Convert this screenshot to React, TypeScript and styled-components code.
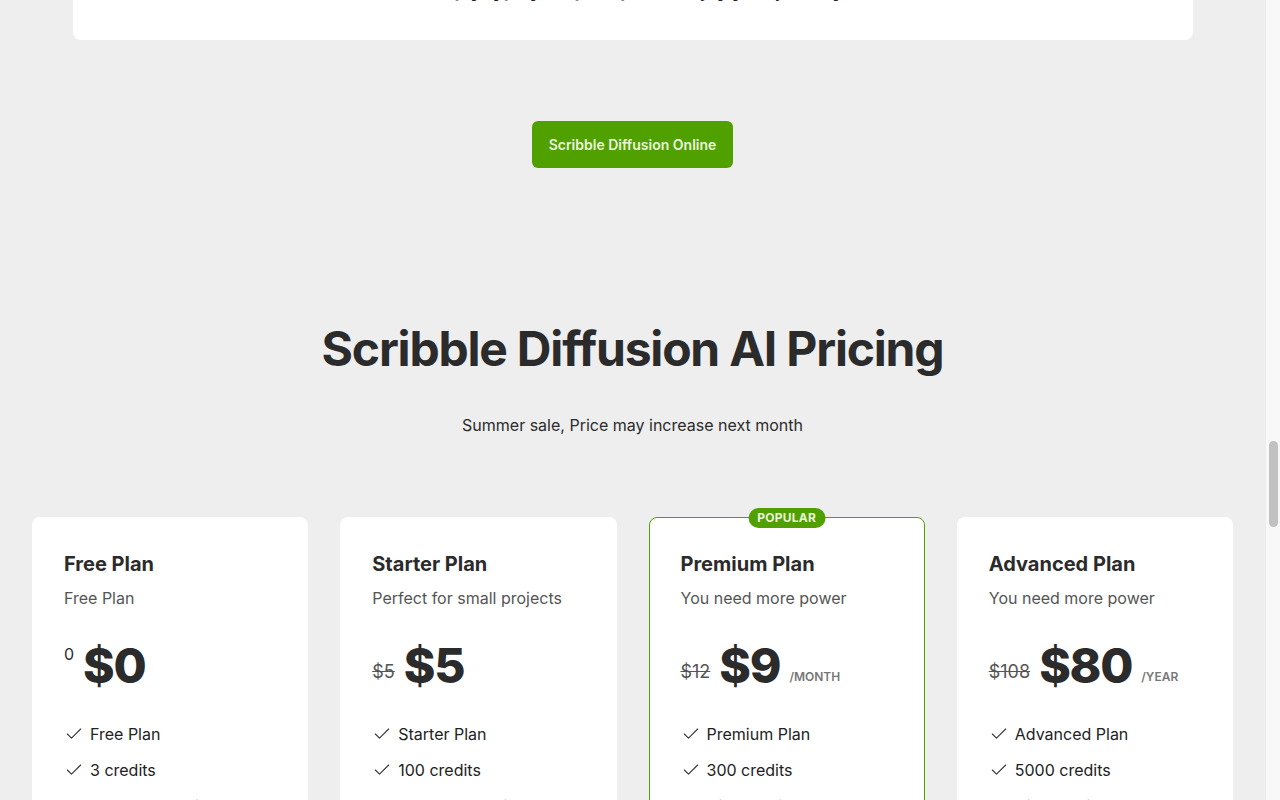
import { useLayoutEffect, useRef } from 'react'
import styled, { createGlobalStyle } from 'styled-components'
import { Check } from 'lucide-react'

const GlobalStyle = createGlobalStyle`
  html, body {
    margin: 0;
    padding: 0;
    background: #eeeeee;
  }
  body {
    font-family: Inter, "Noto Sans", "Liberation Sans", sans-serif;
    color: #222222;
    -webkit-font-smoothing: antialiased;
  }
  * {
    box-sizing: border-box;
  }
`

const Page = styled.div`
  margin-right: 15px;
`

// window scrollbar, drawn since the headless browser hides the native one
const ScrollTrack = styled.div`
  position: fixed;
  top: 0;
  right: 0;
  bottom: 0;
  width: 15px;
  background: #f8f8f8;
  border-left: 1px solid #ececec;
`

const ScrollThumb = styled.div`
  position: absolute;
  top: 441px;
  left: 3px;
  width: 9px;
  height: 86px;
  border-radius: 5px;
  background: #c1c1c1;
`

const Nav = styled.header`
  height: 64px;
  display: flex;
  align-items: center;
  justify-content: space-between;
  padding: 0 32px;
  background: #ffffff;
  border-bottom: 1px solid #e2e2e2;
`

const Brand = styled.div`
  font-size: 20px;
  font-weight: 800;
  color: #2b2b2b;
`

const NavLinks = styled.nav`
  display: flex;
  gap: 28px;
  font-size: 15px;
  color: #444;
`

const Hero = styled.section`
  display: flex;
  flex-direction: column;
  align-items: center;
  padding: 120px 32px 80px;
  text-align: center;
`

const HeroTitle = styled.h1`
  margin: 0;
  font-size: 60px;
  font-weight: 800;
  color: #2b2b2b;
  letter-spacing: -0.01em;
`

const HeroText = styled.p`
  max-width: 720px;
  margin: 28px 0 0;
  font-size: 18px;
  line-height: 1.6;
  color: #444;
`

const Container = styled.div`
  max-width: 1120px;
  margin: 0 auto;
`

const Section = styled.section`
  padding: 80px 0;
`

const SectionTitle = styled.h2`
  margin: 0 0 40px;
  text-align: center;
  font-size: 40px;
  font-weight: 800;
  color: #2b2b2b;
`

const FeatureGrid = styled.div`
  display: grid;
  grid-template-columns: repeat(3, 1fr);
  gap: 32px;
`

const FeatureCard = styled.div`
  background: #ffffff;
  border-radius: 8px;
  padding: 32px;
  min-height: 220px;
`

const FeatureName = styled.h3`
  margin: 0 0 12px;
  font-size: 20px;
  font-weight: 700;
  color: #2b2b2b;
`

const FeatureText = styled.p`
  margin: 0;
  font-size: 16px;
  line-height: 1.6;
  color: #555;
`

const Gallery = styled.div`
  display: grid;
  grid-template-columns: repeat(4, 1fr);
  gap: 24px;
`

const Tile = styled.div<{ $hue: number }>`
  height: 260px;
  border-radius: 8px;
  background: linear-gradient(135deg, hsl(${p => p.$hue}, 45%, 82%), hsl(${p => p.$hue + 40}, 40%, 70%));
`

const InfoCard = styled.div`
  background: #ffffff;
  border-radius: 8px;
  padding: 48px 56px 36px;
  text-align: center;
`

const Step = styled.p`
  margin: 0 0 20px;
  font-size: 16px;
  line-height: 1.7;
  color: #444;
`

const InfoLead = styled.p`
  margin: 0;
  font-size: 18px;
  font-weight: 700;
  line-height: 27px;
  color: #222;
`

const CtaRow = styled.div`
  display: flex;
  justify-content: center;
  margin-top: 81px;
`

const CtaButton = styled.button`
  border: none;
  border-radius: 6px;
  padding: 14px 17px;
  background: #50a000;
  color: #eaf6dc;
  font-family: inherit;
  font-size: 14px;
  font-weight: 600;
  line-height: 19px;
  cursor: pointer;
`

const Pricing = styled.section`
  padding: 152px 32px 80px;
  display: flex;
  flex-direction: column;
  align-items: center;
`

const PricingTitle = styled.h2`
  margin: 0;
  font-size: 48px;
  line-height: 1.2;
  font-weight: 700;
  letter-spacing: -0.025em;
  color: #2b2b2b;
`

const PricingSub = styled.p`
  margin: 35px 0 0;
  font-size: 16px;
  line-height: 24px;
  color: #2b2b2b;
`

const PlanGrid = styled.div`
  width: 100%;
  margin-top: 80px;
  display: grid;
  grid-template-columns: repeat(4, 1fr);
  gap: 32px;
`

const PlanCard = styled.div<{ $featured?: boolean }>`
  position: relative;
  background: #ffffff;
  border-radius: 8px;
  border: 1px solid ${p => (p.$featured ? '#50a000' : 'transparent')};
  padding: 32px 31px 32px;
  display: flex;
  flex-direction: column;
`

const Badge = styled.span`
  position: absolute;
  top: -10px;
  left: 50%;
  transform: translateX(-50%);
  height: 20px;
  padding: 0 9px;
  display: flex;
  align-items: center;
  border-radius: 999px;
  background: #50a000;
  color: #eaf6dc;
  font-size: 12px;
  font-weight: 700;
  letter-spacing: 0.02em;
`

const PlanName = styled.h3`
  margin: 0;
  font-size: 20px;
  line-height: 28px;
  font-weight: 700;
  color: #2b2b2b;
`

const PlanDesc = styled.p`
  margin: 8px 0 0;
  font-size: 16px;
  line-height: 24px;
  color: #555;
`

const PriceRow = styled.div`
  margin-top: 32px;
  display: flex;
  align-items: flex-end;
  gap: 9px;
`

const OldPrice = styled.span<{ $plain?: boolean }>`
  font-size: ${p => (p.$plain ? '16px' : '18px')};
  line-height: ${p => (p.$plain ? '24px' : '28px')};
  color: ${p => (p.$plain ? '#2b2b2b' : '#555')};
  text-decoration: ${p => (p.$plain ? 'none' : 'line-through')};
  align-self: ${p => (p.$plain ? 'flex-start' : 'flex-end')};
  margin-bottom: ${p => (p.$plain ? '0' : '4px')};
`

const Price = styled.span`
  font-size: 48px;
  line-height: 48px;
  font-weight: 800;
  color: #2b2b2b;
  letter-spacing: -0.025em;
`

const Period = styled.span`
  font-size: 12px;
  line-height: 16px;
  font-weight: 600;
  color: #777;
  margin-bottom: 5px;
`

const FeatureList = styled.ul`
  list-style: none;
  margin: 32px 0 0;
  padding: 0;
  display: flex;
  flex-direction: column;
  gap: 12px;
`

const FeatureItem = styled.li`
  display: flex;
  align-items: center;
  gap: 6px;
  font-size: 16px;
  line-height: 24px;
  color: #222;
`

const PlanButton = styled.button<{ $featured?: boolean }>`
  margin-top: 32px;
  height: 44px;
  border-radius: 6px;
  border: 1px solid #50a000;
  background: ${p => (p.$featured ? '#50a000' : '#ffffff')};
  color: ${p => (p.$featured ? '#eaf6dc' : '#50a000')};
  font-family: inherit;
  font-size: 15px;
  font-weight: 600;
`

const FaqItem = styled.div`
  background: #ffffff;
  border-radius: 8px;
  padding: 24px 32px;
  margin-bottom: 16px;
`

const FaqQ = styled.h3`
  margin: 0 0 8px;
  font-size: 18px;
  font-weight: 700;
  color: #2b2b2b;
`

const Footer = styled.footer`
  padding: 48px 32px;
  text-align: center;
  font-size: 14px;
  color: #666;
  border-top: 1px solid #dddddd;
`

const features = [
  ['Sketch to Image', 'Turn rough doodles into detailed artwork in seconds with a diffusion model guided by your lines.'],
  ['Prompt Control', 'Describe the scene you imagine and steer style, colour and mood with a short text prompt.'],
  ['Fast Results', 'Images render on GPU servers, so most results come back in a few seconds.'],
  ['High Resolution', 'Download crisp images that are ready for sharing, printing or further editing.'],
  ['Many Styles', 'Photo, watercolour, anime, 3D render and more: switch styles without redrawing.'],
  ['Private by Default', 'Your sketches and generated images stay in your own account.'],
]

const steps = [
  'Step 1: Draw a simple sketch on the canvas, such as a house, a cat or a mountain landscape.',
  'Step 2: Write a short prompt that describes what the finished picture should look like.',
  'Step 3: Press generate and wait a few seconds while the model turns your scribble into an image.',
  'Step 4: Download the result, or keep editing the sketch and prompt until you like what you see.',
]

type Plan = {
  name: string
  desc: string
  old: string
  price: string
  period?: string
  plainOld?: boolean
  featured?: boolean
  items: string[]
}

const plans: Plan[] = [
  {
    name: 'Free Plan',
    desc: 'Free Plan',
    old: '0',
    price: '$0',
    plainOld: true,
    items: ['Free Plan', '3 credits', 'Standard quality', 'Public gallery', 'Community support'],
  },
  {
    name: 'Starter Plan',
    desc: 'Perfect for small projects',
    old: '$5',
    price: '$5',
    items: ['Starter Plan', '100 credits', 'Standard quality', 'Private images', 'Email support'],
  },
  {
    name: 'Premium Plan',
    desc: 'You need more power',
    old: '$12',
    price: '$9',
    period: '/MONTH',
    featured: true,
    items: ['Premium Plan', '300 credits', 'High quality', 'Private images', 'Priority support'],
  },
  {
    name: 'Advanced Plan',
    desc: 'You need more power',
    old: '$108',
    price: '$80',
    period: '/YEAR',
    items: ['Advanced Plan', '5000 credits', 'High quality', 'Private images', 'Priority support'],
  },
]

const faqs = [
  ['What is Scribble Diffusion?', 'An AI tool that turns your sketches into refined images using a diffusion model.'],
  ['How many credits does one image cost?', 'Each generated image uses one credit from your balance.'],
  ['Can I use the images commercially?', 'Yes, images made on a paid plan can be used in commercial projects.'],
  ['Do unused credits expire?', 'Credits stay in your account for as long as your subscription is active.'],
  ['Can I cancel at any time?', 'Yes, you can cancel your plan from the account page whenever you like.'],
  ['Which browsers are supported?', 'Any modern desktop or mobile browser works with the drawing canvas.'],
  ['Is my data safe?', 'Sketches and images are stored privately and are never sold to third parties.'],
  ['How do I contact support?', 'Write to us by email and we will reply within one working day.'],
]

export default function App() {
  const cardRef = useRef<HTMLDivElement>(null)

  useLayoutEffect(() => {
    const el = cardRef.current
    if (!el) return
    const rect = el.getBoundingClientRect()
    window.scrollTo(0, window.scrollY + rect.bottom - 40)
  }, [])

  return (
    <Page>
      <GlobalStyle />
      <ScrollTrack>
        <ScrollThumb />
      </ScrollTrack>
      <Nav>
        <Brand>Scribble Diffusion</Brand>
        <NavLinks>
          <span>Home</span>
          <span>Features</span>
          <span>Pricing</span>
          <span>FAQ</span>
        </NavLinks>
      </Nav>
      <Hero>
        <HeroTitle>Scribble Diffusion Online</HeroTitle>
        <HeroText>
          Turn your sketch into a refined image using AI. Draw a few lines, describe the scene, and let the model
          do the rest.
        </HeroText>
      </Hero>
      <Container>
        <Section>
          <SectionTitle>Features</SectionTitle>
          <FeatureGrid>
            {features.map(([title, text]) => (
              <FeatureCard key={title}>
                <FeatureName>{title}</FeatureName>
                <FeatureText>{text}</FeatureText>
              </FeatureCard>
            ))}
          </FeatureGrid>
        </Section>
        <Section>
          <SectionTitle>Gallery</SectionTitle>
          <Gallery>
            {[20, 60, 100, 140, 180, 220, 260, 300, 340, 10, 80, 200].map(h => (
              <Tile key={h} $hue={h} />
            ))}
          </Gallery>
        </Section>
        <InfoCard ref={cardRef}>
          <SectionTitle>How to Use Scribble Diffusion</SectionTitle>
          {steps.map(s => (
            <Step key={s}>{s}</Step>
          ))}
          <InfoLead>Simply type your prompt and enjoy your journey</InfoLead>
        </InfoCard>
      </Container>

      <CtaRow>
        <CtaButton>Scribble Diffusion Online</CtaButton>
      </CtaRow>

      <Pricing>
        <PricingTitle>Scribble Diffusion AI Pricing</PricingTitle>
        <PricingSub>Summer sale, Price may increase next month</PricingSub>
        <PlanGrid>
          {plans.map(plan => (
            <PlanCard key={plan.name} $featured={plan.featured}>
              {plan.featured && <Badge>POPULAR</Badge>}
              <PlanName>{plan.name}</PlanName>
              <PlanDesc>{plan.desc}</PlanDesc>
              <PriceRow>
                <OldPrice $plain={plan.plainOld}>{plan.old}</OldPrice>
                <Price>{plan.price}</Price>
                {plan.period && <Period>{plan.period}</Period>}
              </PriceRow>
              <FeatureList>
                {plan.items.map(item => (
                  <FeatureItem key={item}>
                    <Check size={20} strokeWidth={1.3} color="#333" />
                    {item}
                  </FeatureItem>
                ))}
              </FeatureList>
              <PlanButton $featured={plan.featured}>Get Started</PlanButton>
            </PlanCard>
          ))}
        </PlanGrid>
      </Pricing>

      <Container>
        <Section>
          <SectionTitle>Frequently Asked Questions</SectionTitle>
          {faqs.map(([q, a]) => (
            <FaqItem key={q}>
              <FaqQ>{q}</FaqQ>
              <FeatureText>{a}</FeatureText>
            </FaqItem>
          ))}
        </Section>
      </Container>
      <Footer>© 2024 Scribble Diffusion. All rights reserved.</Footer>
    </Page>
  )
}
